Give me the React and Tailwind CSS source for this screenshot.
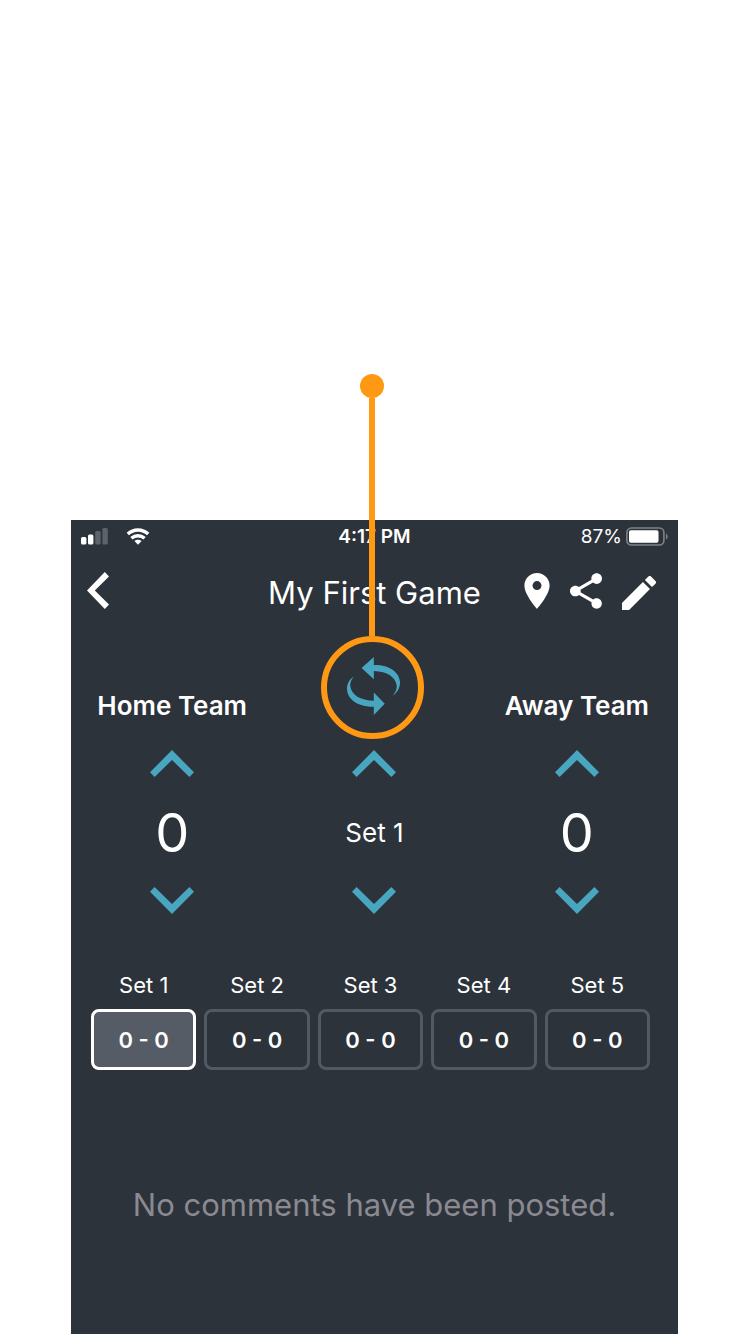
import { useState } from "react";

function Chevron({ down }) {
  return (
    <svg viewBox="0 0 44 27" className="h-[27px] w-11" fill="#48a6c0" aria-hidden="true">
      <path d={down ? "M22 27L0 4.7 4.6 0 22 17 39.4 0 44 4.7Z" : "M22 0L0 22.3 4.6 27 22 10 39.4 27 44 22.3Z"} />
    </svg>
  );
}

function Stepper({ label, children, onUp, onDown }) {
  return (
    <div className="flex flex-col items-center">
      <button type="button" aria-label={`${label} up`} onClick={onUp} className="flex h-11 w-16 items-center justify-center">
        <Chevron />
      </button>
      <div className="flex h-[93px] items-center pt-0.5 text-center">{children}</div>
      <button type="button" aria-label={`${label} down`} onClick={onDown} className="flex h-11 w-16 items-center justify-center">
        <Chevron down />
      </button>
    </div>
  );
}

function StatusBar() {
  return (
    <div className="grid h-8 grid-cols-3 items-center px-2.5 pt-px">
      <div className="flex items-center gap-[18px]">
        <svg viewBox="0 0 27 17" className="h-[17px] w-[27px]" aria-label="Signal">
          <g fill="#fff">
            <rect x="0" y="9" width="5.4" height="7.5" rx="1.5" />
            <rect x="7" y="6.5" width="5.4" height="10" rx="1.5" />
          </g>
          <g fill="#5d636b">
            <rect x="14.2" y="3" width="5.4" height="13.5" rx="1.5" />
            <rect x="21.4" y="0" width="5.4" height="16.5" rx="1.5" />
          </g>
        </svg>
        <svg viewBox="0 0 24 17" className="h-[17px] w-6" aria-label="Wi-Fi">
          <g fill="none" stroke="#fff" strokeWidth="3.4">
            <path d="M1.8 6.1C7.6 0.6 16.4 0.6 22.2 6.1" />
            <path d="M5.4 10.3C9.3 6.9 14.7 6.9 18.6 10.3" />
          </g>
          <path fill="#fff" d="M8.4 13.1C10.5 11.2 13.5 11.2 15.6 13.1L12 16.8Z" />
        </svg>
      </div>
      <span className="text-center text-[19px] font-semibold leading-6">4:17 PM</span>
      <div className="flex items-center justify-end gap-1">
        <span className="text-[19px] leading-6">87%</span>
        <svg viewBox="0 0 42 19" className="h-[19px] w-[42px]" aria-label="Battery">
          <rect x="0.9" y="1" width="37" height="17" rx="4.5" fill="none" stroke="#7d8289" strokeWidth="1.6" />
          <rect x="3" y="3.2" width="29.5" height="12.6" rx="1.8" fill="#fff" />
          <path d="M40 6.5C42.2 7.5 42.2 11.5 40 12.5Z" fill="#7d8289" />
        </svg>
      </div>
    </div>
  );
}

function Header() {
  return (
    <header className="grid h-[82px] grid-cols-[1fr_auto_1fr] items-center px-4">
      <button type="button" aria-label="Back" className="flex h-11 w-11 items-center pb-1.5">
        <svg viewBox="0 0 22 37" className="h-[37px] w-[22px]" fill="#fff" aria-hidden="true">
          <path d="M17.8 0L22 4.4 7.8 18.5 22 32.6 17.8 37 0 18.5Z" />
        </svg>
      </button>
      <h1 className="text-[31px] font-normal leading-9">My First Game</h1>
      <div className="flex items-center justify-end gap-5 pb-1 pr-1.5">
        <button type="button" aria-label="Location">
          <svg viewBox="5 2 14 20" className="h-9 w-[26px]" fill="#fff" aria-hidden="true">
            <path d="M12 2C8.13 2 5 5.13 5 9c0 5.25 7 13 7 13s7-7.75 7-13c0-3.87-3.13-7-7-7zm0 9.5a2.5 2.5 0 0 1 0-5 2.5 2.5 0 0 1 0 5z" />
          </svg>
        </button>
        <button type="button" aria-label="Share">
          <svg viewBox="3 2 18 20" className="h-9 w-8" fill="#fff" aria-hidden="true">
            <path d="M18 16.08c-.76 0-1.44.3-1.96.77L8.91 12.7c.05-.23.09-.46.09-.7s-.04-.47-.09-.7l7.05-4.11c.54.5 1.25.81 2.04.81 1.66 0 3-1.34 3-3s-1.34-3-3-3-3 1.34-3 3c0 .24.04.47.09.7L8.04 9.81C7.5 9.31 6.79 9 6 9c-1.66 0-3 1.34-3 3s1.34 3 3 3c.79 0 1.5-.31 2.04-.81l7.12 4.16c-.05.21-.08.43-.08.65 0 1.61 1.31 2.92 2.92 2.92s2.92-1.31 2.92-2.92-1.31-2.92-2.92-2.92z" />
          </svg>
        </button>
        <button type="button" aria-label="Edit" className="pt-1">
          <svg viewBox="3 3 18 18" className="h-[34px] w-[34px]" fill="#fff" aria-hidden="true">
            <path d="M3 17.25V21h3.75L17.81 9.94l-3.75-3.75L3 17.25zM20.71 7.04a.996.996 0 0 0 0-1.41l-2.34-2.34a.996.996 0 0 0-1.41 0l-1.83 1.83 3.75 3.75 1.83-1.83z" />
          </svg>
        </button>
      </div>
    </header>
  );
}

function SyncButton({ onClick }) {
  return (
    <div className="relative">
      <button type="button" aria-label="Swap sides" onClick={onClick} className="flex h-[103px] w-[103px] items-center justify-center rounded-full border-6 border-[#ff9813] pb-1 pl-[3px]">
        <svg viewBox="291 288 160 175" className="h-[58px] w-[53px]" fill="#48a6c0" aria-hidden="true">
          <path d="M335 321L372 288V312C420 311 450 335 451 364C451 381 443 395 429 405C438 394 442 384 441 374C438 349 413 331 372 330V355Z" />
          <path d="M405 429L372 463V438C323 439 291 415 291 383C291 369 298 356 312 347C303 357 300 367 301 376C304 402 332 419 372 420V395Z" />
        </svg>
      </button>
      <div className="pointer-events-none absolute bottom-full left-1/2 flex -translate-x-1/2 flex-col items-center">
        <span className="h-6 w-6 rounded-full bg-[#ff9813]" />
        <span className="h-[238px] w-1.5 bg-[#ff9813]" />
      </div>
    </div>
  );
}

export default function App() {
  const [scores, setScores] = useState(() => Array.from({ length: 5 }, () => [0, 0]));
  const [current, setCurrent] = useState(0);

  const change = (side, by) =>
    setScores((all) => all.map((s, i) => (i === current ? s.map((v, j) => (j === side ? Math.max(0, v + by) : v)) : s)));
  const swap = () => setScores((all) => all.map(([home, away]) => [away, home]));
  const move = (by) => setCurrent((c) => Math.min(4, Math.max(0, c + by)));

  return (
    <div className="flex min-h-screen flex-col bg-white pl-[71px] pr-[72px] pt-[520px] font-['Inter','Liberation_Sans',sans-serif] text-white">
      <main className="flex grow flex-col bg-[#2d333b]">
        <StatusBar />
        <Header />

        <section className="grid grid-cols-3">
          <div className="flex h-[107px] items-end justify-center pb-[19px]">
            <h2 className="text-[26px] font-semibold leading-8">Home Team</h2>
          </div>
          <div className="flex h-[107px] items-center justify-center pr-1">
            <SyncButton onClick={swap} />
          </div>
          <div className="flex h-[107px] items-end justify-center pb-[19px]">
            <h2 className="text-[26px] font-semibold leading-8">Away Team</h2>
          </div>
          <Stepper label="Home score" onUp={() => change(0, 1)} onDown={() => change(0, -1)}>
            <span className="text-[54px] leading-none">{scores[current][0]}</span>
          </Stepper>
          <Stepper label="Set" onUp={() => move(1)} onDown={() => move(-1)}>
            <span className="text-[26px] leading-8">Set {current + 1}</span>
          </Stepper>
          <Stepper label="Away score" onUp={() => change(1, 1)} onDown={() => change(1, -1)}>
            <span className="text-[54px] leading-none">{scores[current][1]}</span>
          </Stepper>
        </section>

        <section className="grid grid-cols-5 gap-2 pl-5 pr-7 pt-[51px]">
          {scores.map(([home, away], i) => (
            <div key={i} className="flex flex-col gap-3 text-center">
              <span id={`set-${i}`} className="text-[22px] leading-6">Set {i + 1}</span>
              <button
                type="button"
                aria-describedby={`set-${i}`}
                onClick={() => setCurrent(i)}
                className={
                  i === current
                    ? "h-[61px] rounded-lg border-3 border-white bg-[#565c66] pt-0.5 text-[22px] font-semibold"
                    : "h-[61px] rounded-lg border-3 border-[#535963] pt-0.5 text-[22px] font-semibold"
                }
              >
                {home} - {away}
              </button>
            </div>
          ))}
        </section>

        <p className="pt-[115px] text-center text-[31px] leading-10 text-[#8b8991]">No comments have been posted.</p>
      </main>
    </div>
  );
}
